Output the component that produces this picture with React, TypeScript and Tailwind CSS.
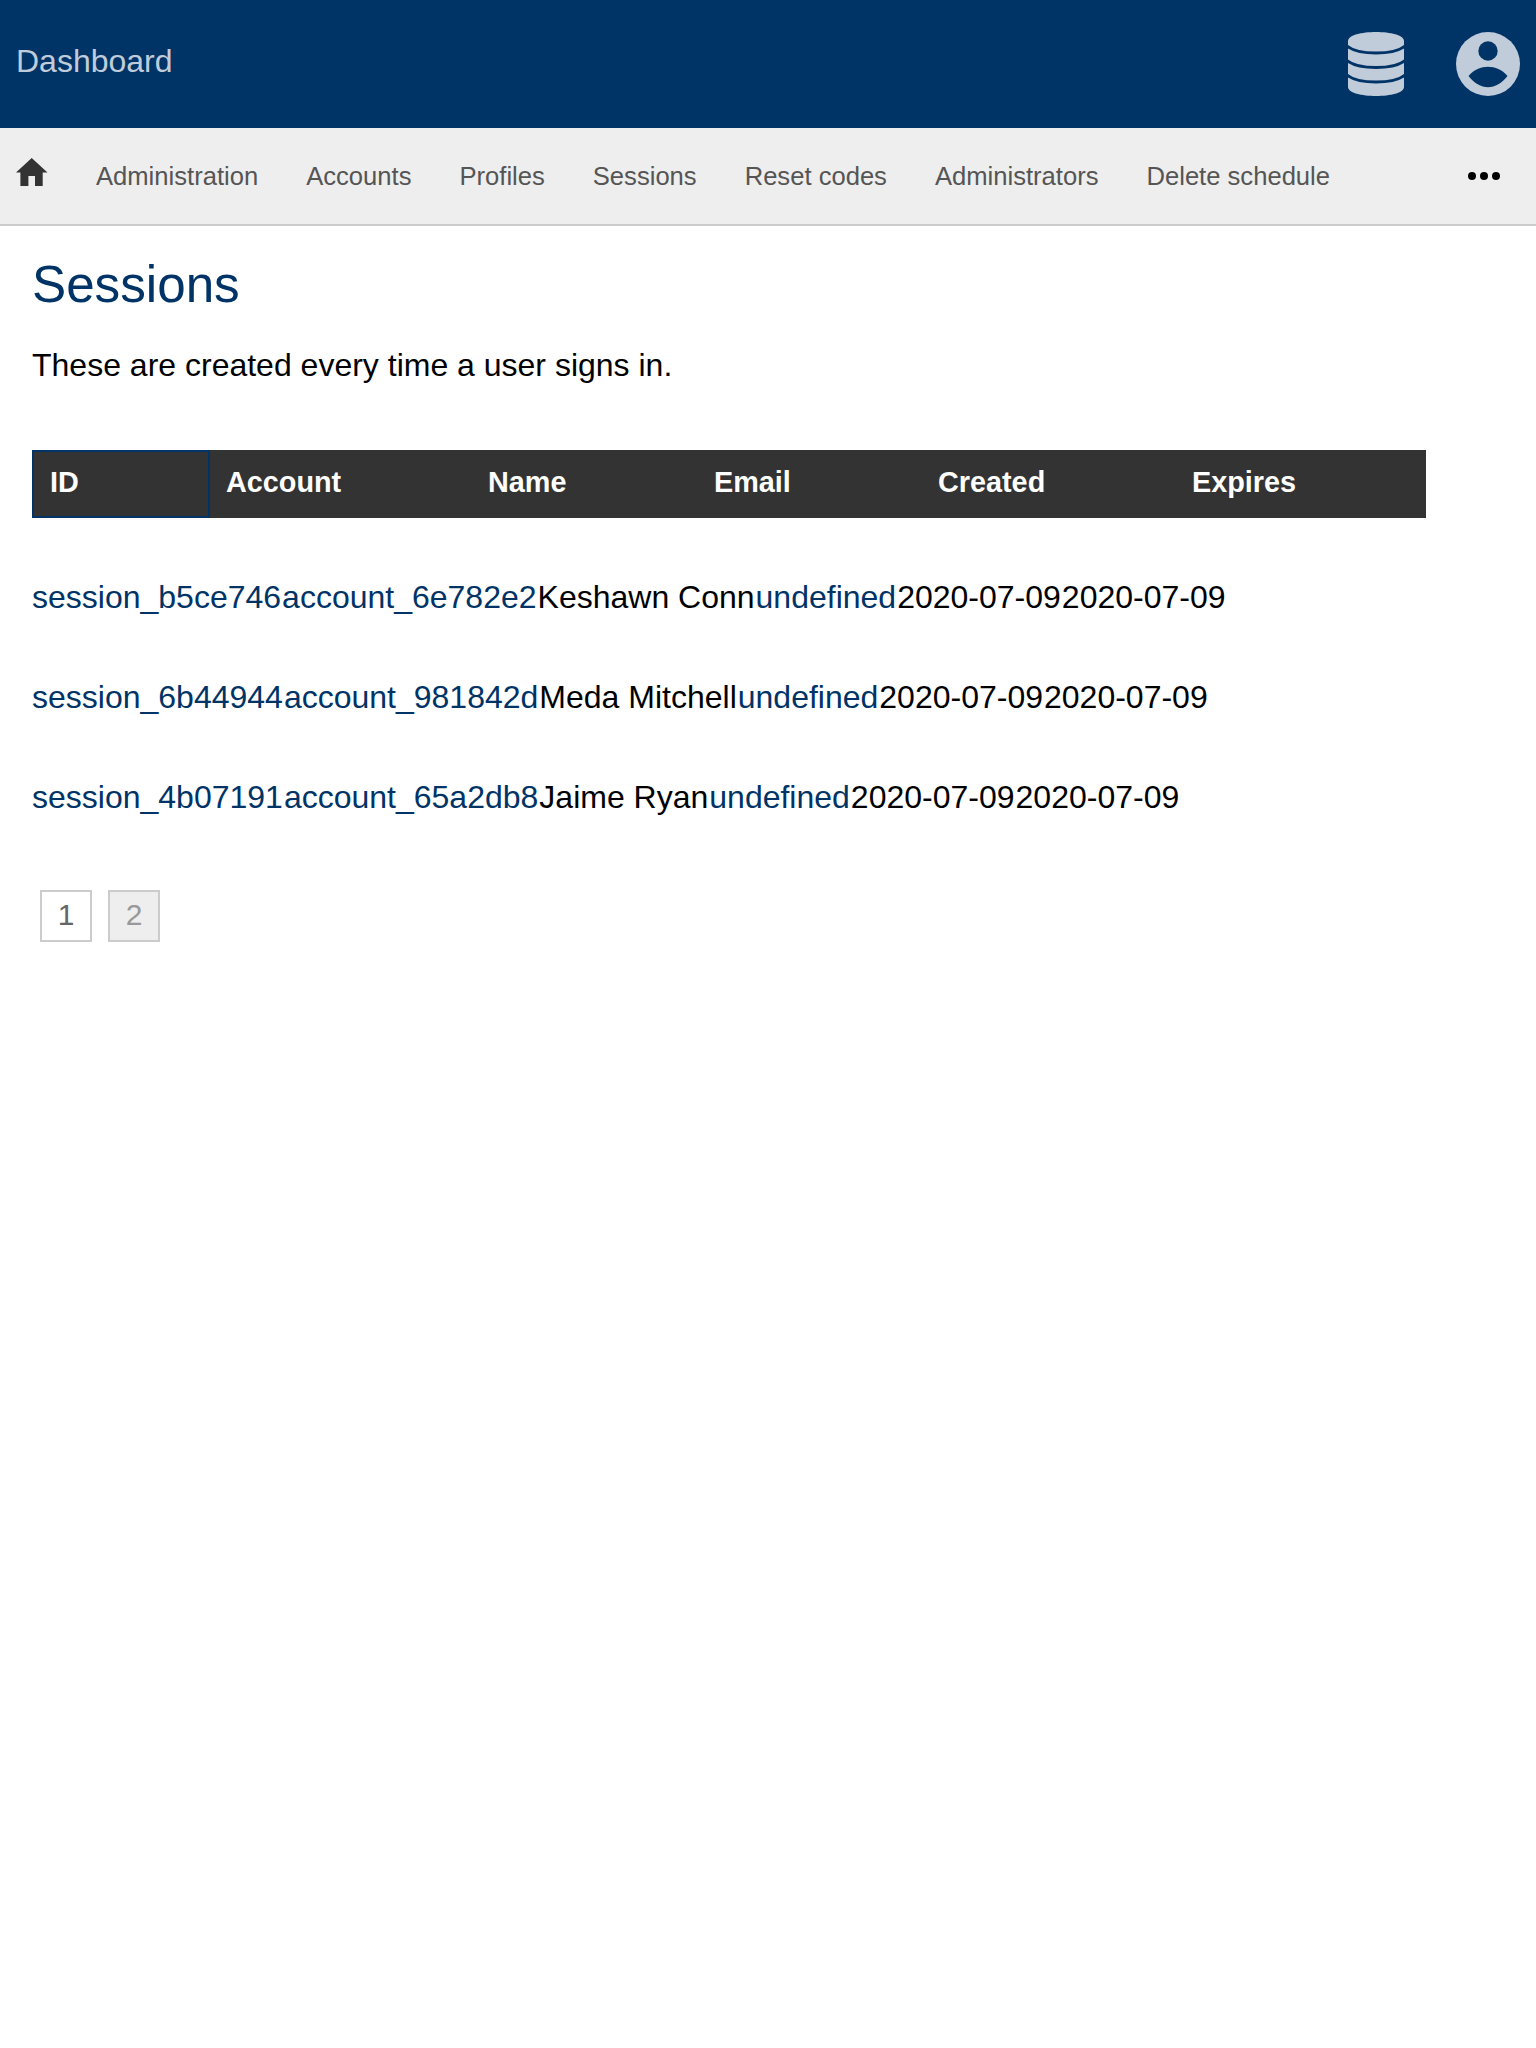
const navItems = ["Administration", "Accounts", "Profiles", "Sessions", "Reset codes", "Administrators", "Delete schedule"];

const columns = [
  { label: "ID", width: "w-[178px]", focused: true },
  { label: "Account", width: "w-[262px]" },
  { label: "Name", width: "w-[226px]" },
  { label: "Email", width: "w-[224px]" },
  { label: "Created", width: "w-[254px]" },
  { label: "Expires", width: "flex-1" },
];

const sessions = [
  { id: "session_b5ce746", account: "account_6e782e2", name: "Keshawn Conn" },
  { id: "session_6b44944", account: "account_981842d", name: "Meda Mitchell" },
  { id: "session_4b07191", account: "account_65a2db8", name: "Jaime Ryan" },
];

function DatabaseIcon() {
  return (
    <svg viewBox="0 0 56 64" className="w-[56px] h-[64px]">
      <path fill="currentColor" d="M0 9C0 3 14 0 28 0s28 3 28 9v46c0 6-14 9-28 9S0 61 0 55z" />
      <g fill="none" stroke="#003366" strokeWidth="3">
        <path d="M-1 14C5 19 16 21 28 21s23-2 29-7" />
        <path d="M-1 28.500C5 33.500 16 35.500 28 35.500s23-2 29-7" />
        <path d="M-1 43C5 48 16 50 28 50s23-2 29-7" />
      </g>
    </svg>
  );
}

function UserIcon() {
  return (
    <svg viewBox="0 0 64 64" className="w-[64px] h-[64px]">
      <circle cx="32" cy="32" r="32" fill="currentColor" />
      <circle cx="32" cy="19" r="9.700" fill="#003366" />
      <path fill="#003366" d="M12.500 44C18 37.500 25 34.700 32 34.700S46 37.500 51.500 44C46 51 39 55.300 32 55.300S18 51 12.500 44z" />
    </svg>
  );
}

function HomeIcon() {
  return (
    <svg viewBox="0 0 32 28" className="w-[32px] h-[28px]" fill="#333333">
      <path d="M15.700 0L0 14.500h4.400V28h8V18h6.600v10h7.700V14.500H31.500z" />
    </svg>
  );
}

export default function App() {
  return (
    <div className="min-h-[2048px] bg-white text-black font-['Liberation_Sans',Arial,sans-serif]">
      <header className="h-[128px] bg-[#003366] flex items-center pl-4 text-[#c0ccda]">
        <a className="text-[32px] leading-none mb-[6px]">Dashboard</a>
        <div className="ml-auto flex items-center gap-[52px] pr-4">
          <DatabaseIcon />
          <UserIcon />
        </div>
      </header>

      <nav className="h-[98px] bg-[#eeeeee] border-b-2 border-[#cccccc] flex items-center pl-4 pr-[36px]">
        <span className="mb-[8px]">
          <HomeIcon />
        </span>
        <ul className="flex items-center gap-[48px] ml-[48px] text-[25.6px] text-[#555555]">
          {navItems.map((item) => (
            <li key={item}>{item}</li>
          ))}
        </ul>
        <div className="ml-auto flex gap-[4px]">
          <span className="w-[8px] h-[8px] rounded-full bg-black" />
          <span className="w-[8px] h-[8px] rounded-full bg-black" />
          <span className="w-[8px] h-[8px] rounded-full bg-black" />
        </div>
      </nav>

      <main className="px-8">
        <h1 className="text-[51.2px] leading-[60px] text-[#003366] mt-[29px]">Sessions</h1>
        <p className="text-[32px] leading-[40px] mt-[30px]">These are created every time a user signs in.</p>

        <div className="w-[1394px] h-[68px] bg-[#333333] flex mt-[65px] text-white text-[28.8px] font-bold">
          {columns.map((col) => (
            <div
              key={col.label}
              className={`${col.width} flex items-center pl-4 pb-[2px] ${col.focused ? "border-2 border-[#003366]" : ""}`}
            >
              {col.label}
            </div>
          ))}
        </div>

        <div className="mt-[29px] text-[32px] leading-[100px]">
          {sessions.map((s) => (
            <div key={s.id} className="flex gap-px">
              <a className="text-[#003366]">{s.id}</a>
              <a className="text-[#003366]">{s.account}</a>
              <span>{s.name}</span>
              <a className="text-[#003366]">undefined</a>
              <span>2020-07-09</span>
              <span>2020-07-09</span>
            </div>
          ))}
        </div>

        <div className="flex gap-4 mt-[43px] ml-2 text-[30px]">
          <span className="w-[52px] h-[52px] border-2 border-[#cccccc] flex items-center justify-center pb-[3px] text-[#666666]">1</span>
          <span className="w-[52px] h-[52px] border-2 border-[#cccccc] bg-[#eeeeee] flex items-center justify-center pb-[3px] text-[#999999]">2</span>
        </div>
      </main>
    </div>
  );
}
